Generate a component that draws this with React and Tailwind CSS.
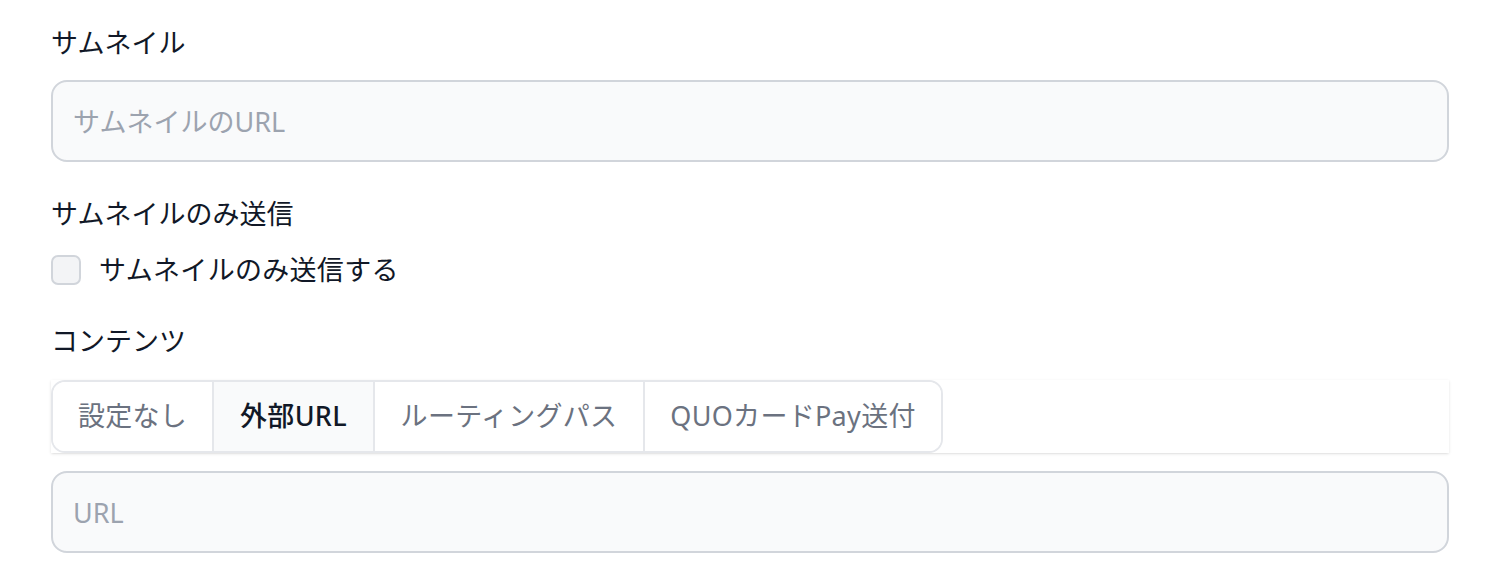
import React, { useState } from "react";

const font = { fontFamily: '"Noto Sans", "Noto Sans CJK JP", sans-serif' };

const tabs = [
  { label: "設定なし", w: "w-[159px]" },
  { label: "外部URL", w: "w-[161px]" },
  { label: "ルーティングパス", w: "w-[270px]" },
  { label: "QUOカードPay送付", w: "w-[298px]" },
];

const App = () => {
  const [active, setActive] = useState(1);
  const [checked, setChecked] = useState(false);

  return (
    <div className="min-h-[582px] bg-white px-[51px] pt-[23px] text-[27px] text-[#111827]" style={font}>
      {/* サムネイル */}
      <label className="block leading-[40px]">サムネイル</label>
      <input
        type="text"
        placeholder="サムネイルのURL"
        className="mt-[17px] block h-[82px] w-full rounded-[16px] border-2 border-[#d1d5db] bg-[#f9fafb] px-[20px] text-[27px] outline-none placeholder:text-[#9ca3af]"
      />

      {/* サムネイルのみ送信 */}
      <label className="mt-[32px] block leading-[40px]">サムネイルのみ送信</label>
      <label className="mt-[16px] flex h-[40px] items-center gap-[18px]">
        <input
          type="checkbox"
          checked={checked}
          onChange={(e) => setChecked(e.target.checked)}
          className="h-[30px] w-[30px] appearance-none rounded-[7px] border-2 border-[#d1d5db] bg-[#f3f4f6]"
        />
        <span className="tracking-[0.3px]">サムネイルのみ送信する</span>
      </label>

      {/* コンテンツ */}
      <label className="mt-[31px] block leading-[40px]">コンテンツ</label>
      <div className="mt-[19px] w-full shadow-sm">
        <div className="inline-flex h-[73px] overflow-hidden rounded-[14px] border-2 border-[#e5e7eb]">
          {tabs.map((t, i) => (
            <button
              key={t.label}
              onClick={() => setActive(i)}
              className={
                "flex shrink-0 items-center justify-center text-[27px] tracking-[0.3px] " +
                t.w +
                (i > 0 ? " border-l-2 border-[#e5e7eb]" : "") +
                (i === active ? " bg-[#f9fafb] font-medium text-[#111827]" : " bg-white text-[#6b7280]")
              }
            >
              {t.label}
            </button>
          ))}
        </div>
      </div>
      <input
        type="text"
        placeholder="URL"
        className="mt-[18px] block h-[82px] w-full rounded-[16px] border-2 border-[#d1d5db] bg-[#f9fafb] px-[20px] text-[27px] outline-none placeholder:text-[#9ca3af]"
      />
    </div>
  );
};

export default App;
